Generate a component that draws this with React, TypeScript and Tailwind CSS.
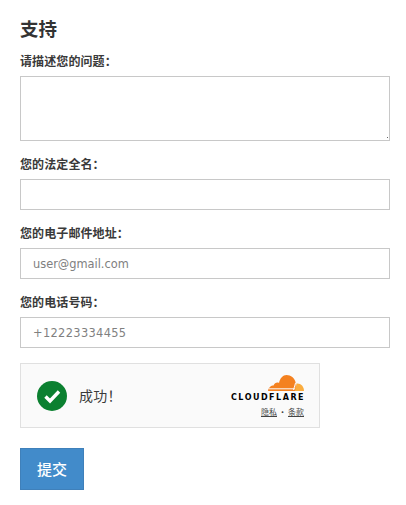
function Label({ children }: { children: string }) {
  return (
    <label className="block text-[12px] leading-[16px] font-bold text-[#3a3a3a] tracking-[0.1px] mb-[6px]">
      {children}
    </label>
  );
}

function Field({ label, placeholder, tracking = "tracking-[0px]" }: { label: string; placeholder?: string; tracking?: string }) {
  return (
    <div className="mt-[16px]">
      <Label>{label}</Label>
      <input
        readOnly
        placeholder={placeholder}
        className={`block w-[370px] h-[31px] border border-[#c8c8c8] bg-white px-[12px] font-['DejaVu_Sans',sans-serif] text-[11.4px] ${tracking} placeholder:text-[#808080] outline-none`}
      />
    </div>
  );
}

export default function App() {
  return (
    <div className="w-[406px] h-[505px] bg-white overflow-hidden pl-[20px] pt-[17px] font-['Open_Sans','Noto_Sans_CJK_SC',sans-serif]">
      <h1 className="text-[18.5px] leading-[24px] font-bold text-[#333333] mb-[13px]">支持</h1>
      <Label>请描述您的问题：</Label>
      <div className="relative w-[370px] h-[65px]">
        <textarea
          readOnly
          className="block w-[370px] h-[65px] resize-none border border-[#c8c8c8] bg-white outline-none"
        />
        <span className="absolute left-[367px] top-[61px] w-[1px] h-[1px] bg-[#666666]" />
      </div>
      <Field label="您的法定全名：" />
      <Field label="您的电子邮件地址：" placeholder="user@gmail.com" />
      <Field label="您的电话号码：" placeholder="+12223334455" tracking="tracking-[0.35px]" />

      <div className="mt-[15px] w-[300px] h-[65px] border border-[#e0e0e0] bg-[#fafafa] flex items-center justify-between pl-[16px] pr-[15px]">
        <div className="flex items-center gap-[12px]">
          <svg width="30" height="30" viewBox="0 0 30 30">
            <circle cx="15" cy="15" r="15" fill="#0b8030" />
            <path d="M8.5 15.5 L13 20 L22 10.5" fill="none" stroke="#ffffff" strokeWidth="3.4" />
          </svg>
          <span className="text-[14px] text-[#3a3a3a] tracking-[0.3px]">成功！</span>
        </div>
        <div className="flex flex-col items-end pt-[1px]">
          <svg width="36" height="16" viewBox="0 0 36 16">
            <path d="M0 16 C0.5 12.5 3 10.5 5.5 10.5 C6.5 8 9 7 11 8 C12 3 15 0 18.5 0 C23 0 26.5 3 27.5 7 L28 16 Z" fill="#f48120" />
            <path d="M27 16 L28.5 8.5 C32.5 8 36 11 36 16 Z" fill="#faad3f" />
            <path d="M1 13.8 H27 M27.5 8 L25.5 15" stroke="#fafafa" strokeWidth="1" fill="none" />
          </svg>
          <span className="mt-[1px] text-[8px] leading-[12px] font-['DejaVu_Sans',sans-serif] font-bold tracking-[1.5px] text-black mr-[-1px]">CLOUDFLARE</span>
          <div className="mt-[2px] text-[8px] leading-[11px] text-[#444444] flex items-center gap-[4px]">
            <span className="underline">隐私</span>
            <span>•</span>
            <span className="underline">条款</span>
          </div>
        </div>
      </div>

      <button className="block mt-[20px] w-[64px] h-[42px] bg-[#428bca] border border-[#3f80ba] text-white text-[15px] font-medium">
        提交
      </button>
    </div>
  );
}
